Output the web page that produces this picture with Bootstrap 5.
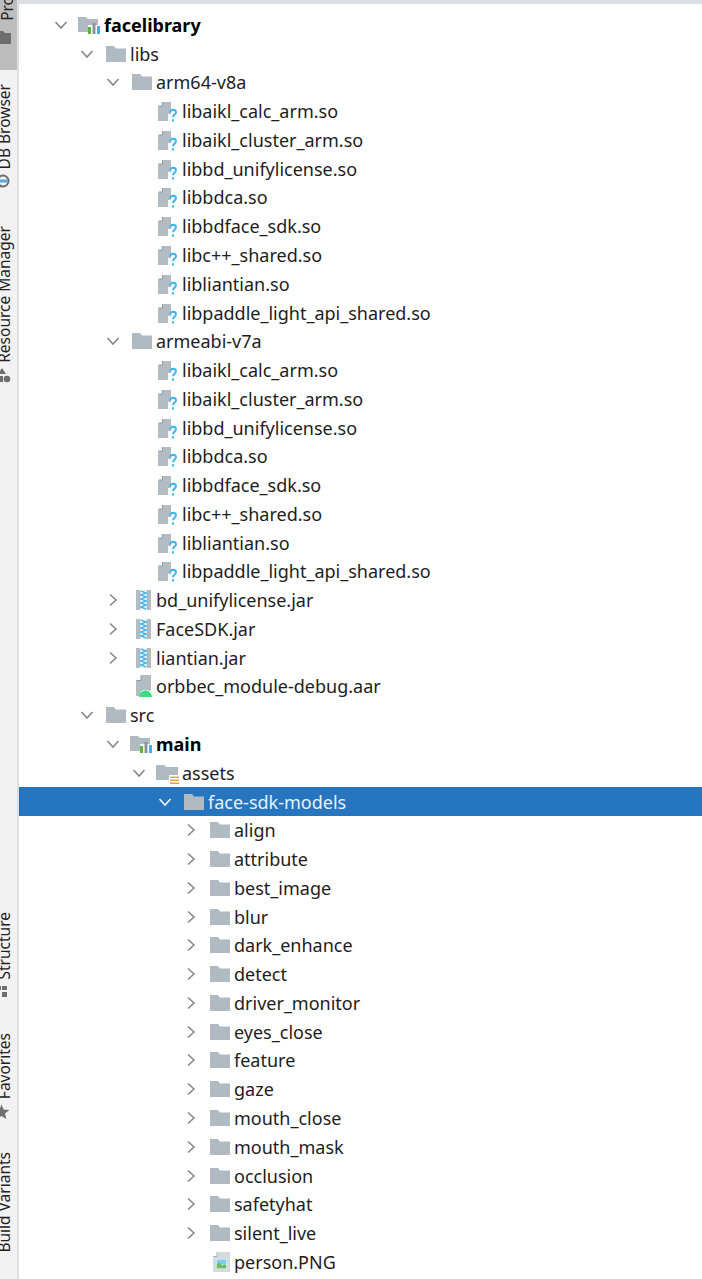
<!DOCTYPE html>
<html lang="en">
<head>
  <meta charset="UTF-8" />
  <title>Project tree</title>
  <link href="https://cdn.jsdelivr.net/npm/bootstrap@5.3.3/dist/css/bootstrap.min.css" rel="stylesheet"/>
  <style>
    html, body { height: 1279px; overflow: hidden; background: #fff; }
    .ide-side { width: 19px; height: 1279px; background: #f2f2f2; border-right: 2px solid #dedede; overflow: hidden; flex: none; }
    .side-tab { writing-mode: vertical-rl; transform: rotate(180deg); font: 15.5px/1 "Noto Sans", sans-serif; color: #222; margin-left: -3px; width: 17px; white-space: nowrap; }
    .side-ico { width: 17px; height: 18px; flex: none; margin-left: -3px; }
    .tab-active { background: #bdbdbd; height: 70px; width: 17px; overflow: hidden; flex: none; margin-bottom: 14px; }
    .tab-active .side-tab { margin-left: 0; margin-top: -8px; }
    .gap-res { margin-top: 35px; }
    .gap-struct { margin-top: 527px; }
    .gap-fav { margin-top: 31px; }
    .ide-tree { padding-top: 6.5px; border-top: 4px solid #dcdfe3; min-width: 0; }
    .tree-row { height: 28.77px; font: 18px/1 "Noto Sans", sans-serif; color: #1d1d1d; white-space: nowrap; }
    .tree-row.sel { background: #2675bf; color: #e9f1f8; margin-left: 0; }
    .tree-row.strong { font-weight: 700; color: #000; }
    .lvl-0 { padding-left: 33px; } .lvl-1 { padding-left: 59px; } .lvl-2 { padding-left: 85px; }
    .lvl-3 { padding-left: 111px; } .lvl-4 { padding-left: 137px; } .lvl-5 { padding-left: 163px; }
    .chev { width: 18px; height: 18px; flex: none; margin-right: 8px; color: #83888c; }
    .sel .chev { color: #f3f7fb; }
    .ico { width: 26px; height: 24px; flex: none; }
  </style>
</head>
<body>
  <svg width="0" height="0" class="position-absolute">
    <symbol id="i-down" viewBox="0 0 18 18"><path d="M3.5 6l5.5 6 5.5-6" fill="none" stroke="currentColor" stroke-width="1.6"/></symbol>
    <symbol id="i-right" viewBox="0 0 18 18"><path d="M6 3.5l6 5.5-6 5.5" fill="none" stroke="currentColor" stroke-width="1.6"/></symbol>
    <symbol id="i-folder" viewBox="0 0 26 24"><path d="M2 4h8l2 2.500h10V20H2z" fill="#afbac3"/></symbol>
    <symbol id="i-module" viewBox="0 0 26 24"><path d="M0 4h8l2 2h10v13H0z" fill="#afbac3"/><path d="M10 12h12v9H10z" fill="#fff"/><path d="M10 14h3v7h-3z" fill="#5bb53a"/><path d="M14.500 10h3v11h-3z" fill="#8a949b"/><path d="M19 13h3v8h-3z" fill="#3eb0e6"/></symbol>
    <symbol id="i-assets" viewBox="0 0 26 24"><path d="M0 4h8l2 2h12v13H0z" fill="#afbac3"/><path d="M13 14h11v10H13z" fill="#fff"/><path d="M14 15.500h9v1.600h-9zM14 18.500h9v1.600h-9zM14 21.500h9v1.600h-9z" fill="#dba94f"/></symbol>
    <symbol id="i-unknown" viewBox="0 0 26 24"><path d="M6 3h9v12h-3v7H2V7z" fill="#b3bcc3"/><path d="M6 3v4H2z" fill="#fff"/><path d="M6.500 3.500v3.500H3" fill="none" stroke="#8f989f"/><path d="M14 13.500c.4-2 1.500-2.800 3-2.800 1.700 0 3 1 3 2.600 0 2.400-3 2.400-3 5" fill="none" stroke="#3eb3ea" stroke-width="1.900"/><path d="M16 20.300h2v2.200h-2z" fill="#3eb3ea"/></symbol>
    <symbol id="i-jar" viewBox="0 0 26 24"><path d="M6 2h15v20H6z" fill="#b3bcc3"/><path d="M10.500 2h6v20h-6z" fill="#fff"/><path d="M11 3l5 2-5 2 5 2-5 2 5 2-5 2 5 2-5 2 5 2" fill="none" stroke="#4ab6e6" stroke-width="1.600"/></symbol>
    <symbol id="i-aar" viewBox="0 0 26 24"><path d="M11 1h10v15h-10v6H6V6z" fill="#b3bcc3"/><path d="M11 1v5H6z" fill="#fff"/><path d="M11 2v4.500H7" fill="none" stroke="#8f989f"/><path d="M9 23c.3-4 3.500-6.500 6.500-6.500s6.200 2.500 6.500 6.500z" fill="#3ddc84"/><path d="M11 15l1.500 2.500M20 15l-1.500 2.500" stroke="#3ddc84" stroke-width="1"/></symbol>
    <symbol id="i-png" viewBox="0 0 26 24"><path d="M9 2h13v20H5V6z" fill="#d4dadf"/><path d="M9 2v4H5z" fill="#fff"/><path d="M9 2.500v4H5.500" fill="none" stroke="#a5aeb5"/><path d="M8 9h11v10H8z" fill="#fff"/><path d="M8.500 9.500h10v5h-10z" fill="#7fcbe8"/><path d="M8.500 18.500v-4l3-2 3 3 2-1.500 2 1.500v3z" fill="#6fbd6a"/></symbol>
    <symbol id="s-project" viewBox="0 0 17 18"><path d="M0 2h6l2 2h6v11H0z" fill="#6e6e6e"/></symbol>
    <symbol id="s-db" viewBox="0 0 17 18"><circle cx="6" cy="8" r="5.500" fill="none" stroke="#6e6e6e" stroke-width="2"/><path d="M2 8h8" stroke="#55a7dc" stroke-width="3"/><path d="M3 13l-2 4" stroke="#6e6e6e" stroke-width="2"/></symbol>
    <symbol id="s-res" viewBox="0 0 17 18"><path d="M5 1l4 6H1z" fill="#6e6e6e"/><path d="M0 9h6v6H0z" fill="#6e6e6e"/><circle cx="10" cy="12" r="3.300" fill="#6e6e6e"/></symbol>
    <symbol id="s-struct" viewBox="0 0 17 18"><path d="M0 2h4v4H0zM5 2h5v4H5zM5 8h5v5H5zM0 9h3v4H0z" fill="#6e6e6e"/></symbol>
    <symbol id="s-star" viewBox="0 0 17 18"><path d="M4.500 1.500l2 5 6 .4-4.600 3.600 1.600 5.500-5-3-5 3 1-5.500L-3 7l5.500-.4z" fill="#6e6e6e"/></symbol>
  </svg>

  <div class="d-flex">
    <div class="ide-side d-flex flex-column">
      <div class="tab-active d-flex flex-column">
        <div class="side-tab">Proj</div>
        <svg class="side-ico mt-2"><use href="#s-project"/></svg>
      </div>
      <div class="side-tab">DB Browser</div>
      <svg class="side-ico mt-1"><use href="#s-db"/></svg>
      <div class="side-tab gap-res">Resource Manager</div>
      <svg class="side-ico mt-1"><use href="#s-res"/></svg>
      <div class="side-tab gap-struct">Structure</div>
      <svg class="side-ico mt-1"><use href="#s-struct"/></svg>
      <div class="side-tab gap-fav">Favorites</div>
      <svg class="side-ico mt-1"><use href="#s-star"/></svg>
      <div class="side-tab gap-fav">Build Variants</div>
    </div>
    <div id="tree" class="ide-tree flex-grow-1"></div>
  </div>

  <script>
    const soFiles = ["libaikl_calc_arm.so", "libaikl_cluster_arm.so", "libbd_unifylicense.so", "libbdca.so",
      "libbdface_sdk.so", "libc++_shared.so", "libliantian.so", "libpaddle_light_api_shared.so"];
    const models = ["align", "attribute", "best_image", "blur", "dark_enhance", "detect", "driver_monitor",
      "eyes_close", "feature", "gaze", "mouth_close", "mouth_mask", "occlusion", "safetyhat", "silent_live"];

    // [level, chevron, icon, label, extra class]
    const rows = [
      [0, "down", "module", "facelibrary", "strong"],
      [1, "down", "folder", "libs"],
      [2, "down", "folder", "arm64-v8a"],
      ...soFiles.map(f => [3, "", "unknown", f]),
      [2, "down", "folder", "armeabi-v7a"],
      ...soFiles.map(f => [3, "", "unknown", f]),
      [2, "right", "jar", "bd_unifylicense.jar"],
      [2, "right", "jar", "FaceSDK.jar"],
      [2, "right", "jar", "liantian.jar"],
      [2, "", "aar", "orbbec_module-debug.aar"],
      [1, "down", "folder", "src"],
      [2, "down", "module", "main", "strong"],
      [3, "down", "assets", "assets"],
      [4, "down", "folder", "face-sdk-models", "sel"],
      ...models.map(m => [5, "right", "folder", m]),
      [5, "", "png", "person.PNG"]
    ];

    const tree = document.getElementById("tree");
    rows.forEach(([level, chev, icon, label, extra]) => {
      const row = document.createElement("div");
      row.className = `tree-row d-flex align-items-center lvl-${level} ${extra || ""}`;
      const chevHtml = chev ? `<svg class="chev"><use href="#i-${chev}"/></svg>` : `<span class="chev"></span>`;
      row.innerHTML = `${chevHtml}<svg class="ico"><use href="#i-${icon}"/></svg><span>${label}</span>`;
      tree.appendChild(row);
    });
  </script>
  <script src="https://cdn.jsdelivr.net/npm/bootstrap@5.3.3/dist/js/bootstrap.bundle.min.js"></script>
</body>
</html>
